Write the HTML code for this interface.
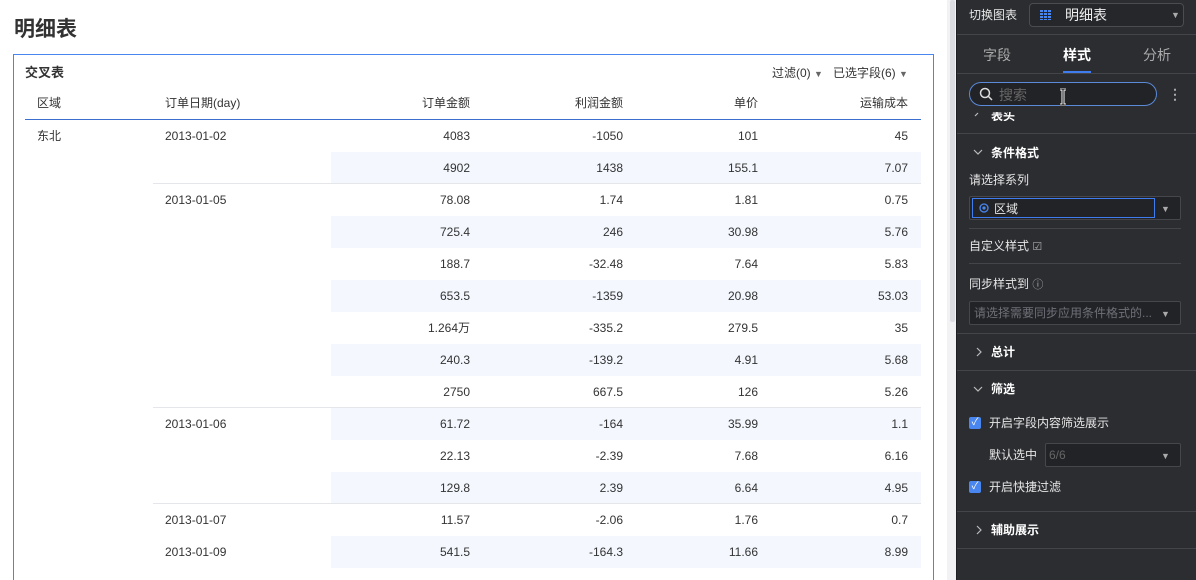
<!DOCTYPE html>
<html style="width:1196px;height:580px;overflow:hidden"><head><meta charset="utf-8"><style>
*{margin:0;padding:0;box-sizing:border-box}
body{width:1196px;height:580px;overflow:hidden;background:#fff;font-family:"Liberation Sans","Noto Sans CJK SC",sans-serif;position:relative;color:#333;line-height:1.2}
.a{position:absolute;white-space:nowrap}
.t{font-size:12px;color:#333;line-height:14px}
.r{text-align:right}
.p{color:#e6e6e6;font-size:12px;line-height:14px}
.b{font-weight:bold;font-size:12px;color:#fff;line-height:14px}
.hr{position:absolute;height:1px;background:#43454b}
</style></head><body>
<div class="a" style="left:14px;top:17px;font-size:21px;font-weight:bold;color:#333;line-height:25px">明细表</div>
<div class="a" style="left:13px;top:54px;width:921px;height:540px;border:1px solid #4a86f0"></div>
<div class="a" style="left:25px;top:65px;font-size:13px;font-weight:bold;color:#333;line-height:16px">交叉表</div>
<div class="a t" style="left:772px;top:66px">过滤(0) <span style="font-size:9px;color:#666">▼</span></div>
<div class="a t" style="left:833px;top:66px">已选字段(6) <span style="font-size:9px;color:#666">▼</span></div>
<div class="a t" style="left:37px;top:96px">区域</div>
<div class="a t" style="left:165px;top:96px">订单日期(day)</div>
<div class="a t r" style="left:370px;width:100px;top:96px">订单金额</div>
<div class="a t r" style="left:523px;width:100px;top:96px">利润金额</div>
<div class="a t r" style="left:658px;width:100px;top:96px">单价</div>
<div class="a t r" style="left:808px;width:100px;top:96px">运输成本</div>
<div class="a" style="left:25px;top:119px;width:896px;height:1px;background:#3a6fd0"></div>
<div id="rows"></div>
<div class="a t" style="left:37px;top:129px">东北</div>
<script>
var d=[["2013-01-02","4083","-1050","101","45"],["","4902","1438","155.1","7.07"],["2013-01-05","78.08","1.74","1.81","0.75"],["","725.4","246","30.98","5.76"],["","188.7","-32.48","7.64","5.83"],["","653.5","-1359","20.98","53.03"],["","1.264万","-335.2","279.5","35"],["","240.3","-139.2","4.91","5.68"],["","2750","667.5","126","5.26"],["2013-01-06","61.72","-164","35.99","1.1"],["","22.13","-2.39","7.68","6.16"],["","129.8","2.39","6.64","4.95"],["2013-01-07","11.57","-2.06","1.76","0.7"],["2013-01-09","541.5","-164.3","11.66","8.99"]];
var h="";for(var i=0;i<d.length;i++){var y=120+i*32;
if(i%2==1)h+='<div class="a" style="left:331px;top:'+y+'px;width:590px;height:32px;background:#f4f8fe"></div>';
if(i==2||i==9||i==12)h+='<div class="a" style="left:153px;top:'+(y-1)+'px;width:768px;height:1px;background:#e4e6ea"></div>';
var ty=y+9;
if(d[i][0])h+='<div class="a t" style="left:165px;top:'+ty+'px">'+d[i][0]+'</div>';
var R=[470,623,758,908];for(var j=0;j<4;j++)h+='<div class="a t r" style="left:'+(R[j]-100)+'px;width:100px;top:'+ty+'px">'+d[i][j+1]+'</div>';}
document.getElementById("rows").innerHTML=h;
</script>
<div class="a" style="left:947px;top:0;width:9px;height:580px;background:#f2f2f4"></div>
<div class="a" style="left:950px;top:0;width:5px;height:322px;background:#dcdde3;border-radius:2px"></div>
<div class="a" style="left:956px;top:0;width:240px;height:580px;background:#2c2d31;border-left:1px solid #1e1f22"></div>
<div class="a p" style="left:969px;top:8px">切换图表</div>
<div class="a" style="left:1029px;top:3px;width:155px;height:24px;border:1px solid #4a4c52;border-radius:4px;background:#26272b"></div>
<div class="a" style="left:1040px;top:10px;width:12px;height:10px;background:repeating-linear-gradient(90deg,#4a86f0 0 3px,#26272b 3px 4px)"></div>
<div class="a" style="left:1040px;top:10px;width:12px;height:10px;background:repeating-linear-gradient(180deg,transparent 0 2px,#26272b 2px 3px)"></div>
<div class="a" style="left:1065px;top:7px;font-size:14px;color:#eee;line-height:17px">明细表</div>
<div class="a" style="left:1171px;top:10px;font-size:9px;color:#aaa">▼</div>
<div class="hr" style="left:957px;top:34px;width:239px"></div>
<div class="a" style="left:983px;top:47px;font-size:14px;color:#aaa;line-height:17px">字段</div>
<div class="a" style="left:1063px;top:47px;font-size:14px;color:#fff;font-weight:bold;line-height:17px">样式</div>
<div class="a" style="left:1143px;top:47px;font-size:14px;color:#aaa;line-height:17px">分析</div>
<div class="a" style="left:1063px;top:71px;width:28px;height:2px;background:#3e7cf0"></div>
<div class="hr" style="left:957px;top:73px;width:239px"></div>
<div class="a" style="left:969px;top:82px;width:188px;height:24px;border:1px solid #5a8ad8;border-radius:12px;background:#222327"></div>
<svg class="a" style="left:979px;top:87px" width="14" height="14" viewBox="0 0 14 14"><circle cx="6" cy="6" r="4.5" fill="none" stroke="#ddd" stroke-width="1.5"/><path d="M9.5 9.5L13 13" stroke="#ddd" stroke-width="1.5"/></svg>
<div class="a" style="left:999px;top:87px;font-size:14px;color:#666;line-height:17px">搜索</div>
<svg class="a" style="left:1058px;top:88px" width="10" height="18" viewBox="0 0 10 18"><path d="M2 1h6M5 1v16M2 17h6" stroke="#fff" stroke-width="3"/><path d="M2 1h6M5 1v16M2 17h6" stroke="#000" stroke-width="1"/></svg>
<div class="a" style="left:1168px;top:86px;font-size:14px;color:#aaa;font-weight:bold">⋮</div>
<div class="a" style="left:957px;top:112px;width:239px;height:9px;overflow:hidden">
<svg class="a" style="left:17px;top:0px" width="8" height="8"><path d="M1 4L4 1" stroke="#bbb" stroke-width="1.2" fill="none"/></svg>
<div class="a b" style="left:34px;top:-3px">表头</div></div>
<div class="hr" style="left:957px;top:133px;width:239px"></div>
<svg class="a" style="left:973px;top:148px" width="10" height="8"><path d="M1 2l4 4 4-4" stroke="#bbb" stroke-width="1.2" fill="none"/></svg>
<div class="a b" style="left:991px;top:146px">条件格式</div>
<div class="a p" style="left:969px;top:173px">请选择系列</div>
<div class="a" style="left:969px;top:196px;width:212px;height:24px;border:1px solid #45474c;background:#222327;border-radius:2px"></div>
<div class="a" style="left:972px;top:198px;width:183px;height:20px;border:1px solid #3e7cf0"></div>
<svg class="a" style="left:979px;top:203px" width="10" height="10"><circle cx="5" cy="5" r="4" fill="none" stroke="#4a86f0" stroke-width="1.3"/><circle cx="5" cy="5" r="1.6" fill="#4a86f0"/></svg>
<div class="a p" style="left:994px;top:202px">区域</div>
<div class="a" style="left:1161px;top:204px;font-size:9px;color:#aaa">▼</div>
<div class="hr" style="left:969px;top:228px;width:212px"></div>
<div class="a p" style="left:969px;top:239px">自定义样式 <span style="color:#aaa;font-size:11px">☑</span></div>
<div class="hr" style="left:969px;top:263px;width:212px"></div>
<div class="a p" style="left:969px;top:277px">同步样式到 <span style="color:#aaa;font-size:11px">ⓘ</span></div>
<div class="a" style="left:969px;top:301px;width:212px;height:24px;border:1px solid #45474c;background:#222327;border-radius:2px"></div>
<div class="a" style="left:974px;top:306px;font-size:12px;color:#6e7078;line-height:14px">请选择需要同步应用条件格式的...</div>
<div class="a" style="left:1161px;top:309px;font-size:9px;color:#aaa">▼</div>
<div class="hr" style="left:957px;top:333px;width:239px"></div>
<svg class="a" style="left:975px;top:347px" width="8" height="10"><path d="M2 1l4 4-4 4" stroke="#bbb" stroke-width="1.2" fill="none"/></svg>
<div class="a b" style="left:991px;top:345px">总计</div>
<div class="hr" style="left:957px;top:370px;width:239px"></div>
<svg class="a" style="left:973px;top:385px" width="10" height="8"><path d="M1 2l4 4 4-4" stroke="#bbb" stroke-width="1.2" fill="none"/></svg>
<div class="a b" style="left:991px;top:382px">筛选</div>
<div class="a" style="left:969px;top:417px;width:12px;height:12px;background:#4a86f0;border-radius:2px;color:#fff;font-size:10px;line-height:12px;text-align:center">✓</div>
<div class="a p" style="left:989px;top:416px">开启字段内容筛选展示</div>
<div class="a p" style="left:989px;top:448px">默认选中</div>
<div class="a" style="left:1045px;top:443px;width:136px;height:24px;border:1px solid #45474c;background:#222327;border-radius:2px"></div>
<div class="a" style="left:1049px;top:448px;font-size:12px;color:#666;line-height:14px">6/6</div>
<div class="a" style="left:1161px;top:451px;font-size:9px;color:#aaa">▼</div>
<div class="a" style="left:969px;top:481px;width:12px;height:12px;background:#4a86f0;border-radius:2px;color:#fff;font-size:10px;line-height:12px;text-align:center">✓</div>
<div class="a p" style="left:989px;top:480px">开启快捷过滤</div>
<div class="hr" style="left:957px;top:511px;width:239px"></div>
<svg class="a" style="left:975px;top:525px" width="8" height="10"><path d="M2 1l4 4-4 4" stroke="#bbb" stroke-width="1.2" fill="none"/></svg>
<div class="a b" style="left:991px;top:523px">辅助展示</div>
<div class="hr" style="left:957px;top:548px;width:239px"></div>
</body></html>
